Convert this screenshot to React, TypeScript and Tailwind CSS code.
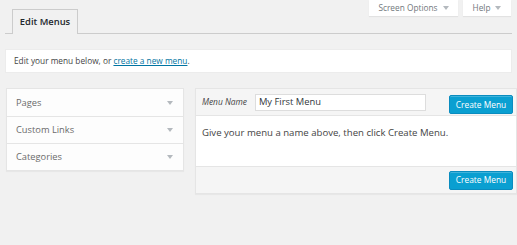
import React from "react";

function Caret() {
  return <span className="inline-block w-0 h-0 border-l-[3px] border-r-[3px] border-t-[4px] border-l-transparent border-r-transparent border-t-[#b4b9be]" />;
}

function CreateButton() {
  return (
    <button className="h-[19px] w-[64px] rounded-[2px] bg-[#0a9fd1] border border-[#0a8cbf] text-white text-[8.4px] leading-none shadow-[inset_0_1px_0_rgba(120,200,230,0.5)]">
      Create Menu
    </button>
  );
}

export default function App() {
  const sections = ["Pages", "Custom Links", "Categories"];
  return (
    <div className="w-[517px] h-[245px] bg-[#f1f1f1] overflow-hidden font-['Open_Sans',sans-serif] text-[#444]">
      {/* header with tab and screen meta */}
      <div className="mx-[5px] h-[34px] flex justify-between items-start border-b border-[#ccc]">
        <div className="self-end ml-[7px] -mb-px h-[25px] w-[66px] border border-b-0 border-[#ccc] bg-[#f1f1f1] flex items-center justify-center text-[9.4px] font-semibold text-[#23282d]">
          Edit Menus
        </div>
        <div className="flex gap-[5px] mr-[1px]">
          <div className="h-[16px] w-[89px] bg-white shadow-[0_1px_1px_rgba(0,0,0,0.06)] flex items-center justify-center gap-[5px] text-[8.3px] text-[#72777c]">
            Screen Options <Caret />
          </div>
          <div className="h-[16px] w-[48px] bg-white shadow-[0_1px_1px_rgba(0,0,0,0.06)] flex items-center justify-center gap-[5px] text-[8.3px] text-[#72777c]">
            Help <Caret />
          </div>
        </div>
      </div>

      {/* notice */}
      <div className="mx-[5px] mt-[15px] w-[507px] h-[24px] bg-white border border-[#ececec] flex items-center pl-[8px] text-[8.3px] text-[#444]">
        Edit your menu below, or&nbsp;<span className="text-[#0074a2] underline">create a new menu</span>.
      </div>

      {/* body */}
      <div className="mt-[15px] flex items-start">
        <div className="ml-[6px] w-[179px] bg-white border border-[#e5e5e5] shadow-[0_1px_1px_rgba(0,0,0,0.04)]">
          {sections.map((s, i) => (
            <div
              key={s}
              className={`h-[27px] flex items-center justify-between pl-[9px] pr-[10px] text-[9.3px] text-[#6b6b6b] bg-[#fdfdfd] ${i > 0 ? "border-t border-[#e5e5e5]" : ""}`}
            >
              <span>{s}</span>
              <Caret />
            </div>
          ))}
        </div>

        <div className="ml-[11px] w-[324px] border border-[#e5e5e5] bg-white shadow-[0_1px_1px_rgba(0,0,0,0.04)]">
          <div className="h-[27px] bg-[#f5f5f5] border-b border-[#e5e5e5] flex items-center pl-[6px] pr-[3px]">
            <span className="italic text-[8.4px] text-[#444] w-[53px]">Menu Name</span>
            <div className="h-[17px] w-[171px] bg-white border border-[#ddd] flex items-center pl-[3px] text-[9.4px] text-[#32373c]">
              My First Menu
            </div>
            <div className="ml-auto">
              <CreateButton />
            </div>
          </div>
          <div className="h-[50px] bg-white pl-[6px] pt-[12px] text-[9.6px] text-[#444] leading-none">
            Give your menu a name above, then click Create Menu.
          </div>
          <div className="h-[27px] bg-[#f5f5f5] border-t border-[#e5e5e5] flex items-center justify-end pr-[3px]">
            <CreateButton />
          </div>
        </div>
      </div>
    </div>
  );
}
